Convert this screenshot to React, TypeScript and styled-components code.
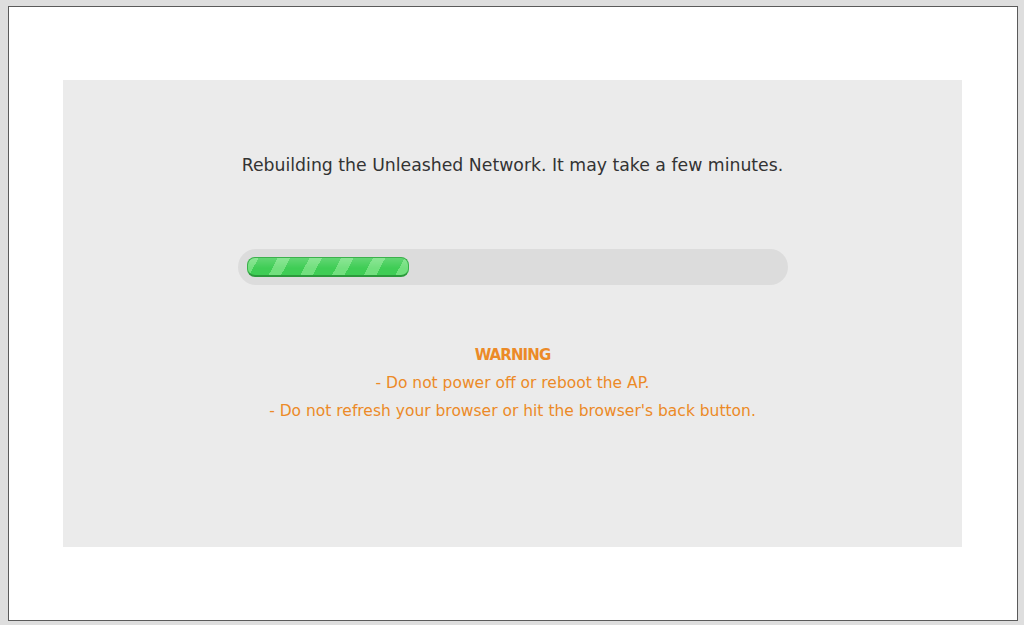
import React from 'react';
import styled, { createGlobalStyle } from 'styled-components';

const GlobalStyle = createGlobalStyle`
    html, body {
        margin: 0;
        padding: 0;
        background: #dedede;
    }
    body {
        padding: 6px 6px 4px 8px;
        font-family: 'DejaVu Sans', Verdana, sans-serif;
    }
`;

const Frame = styled.div`
    box-sizing: border-box;
    height: 615px;
    background: #fff;
    border: 1px solid #5a5a5a;
    padding: 73px 55px 73px 54px;
`;

const Panel = styled.div`
    height: 100%;
    background: #ebebeb;
    display: flex;
    flex-direction: column;
    align-items: center;
`;

const Message = styled.div`
    margin-top: 73px;
    font-size: 17.3px;
    color: #333;
    line-height: 24px;
`;

const Track = styled.div`
    margin-top: 72px;
    width: 550px;
    height: 36px;
    border-radius: 18px;
    background: #dcdcdc;
    box-sizing: border-box;
    padding: 8px 9px;
`;

const Fill = styled.div`
    height: 20px;
    border-radius: 8px;
    box-sizing: border-box;
    border: 1px solid #3cb14c;
    border-bottom: 2px solid #2b9a3b;
    background-color: #45d15a;
    background-image: linear-gradient(rgba(255, 255, 255, 0.18), rgba(255, 255, 255, 0) 60%),
        repeating-linear-gradient(
            -62deg,
            #72e07e 0px,
            #72e07e 11px,
            #3fcd55 11px,
            #3fcd55 28px
        );
`;

const Warning = styled.div`
    margin-top: 56px;
    color: #ec8a27;
    font-size: 15.5px;
    line-height: 28px;
    text-align: center;
`;

const WarningTitle = styled.div`
    font-weight: bold;
    font-size: 15px;
    letter-spacing: -0.9px;
`;

const progress = 162;

export default function App() {
    return (
        <>
            <GlobalStyle />
            <Frame>
                <Panel>
                    <Message>Rebuilding the Unleashed Network. It may take a few minutes.</Message>
                    <Track>
                        <Fill style={{ width: progress }} />
                    </Track>
                    <Warning>
                        <WarningTitle>WARNING</WarningTitle>
                        <div>- Do not power off or reboot the AP.</div>
                        <div>- Do not refresh your browser or hit the browser's back button.</div>
                    </Warning>
                </Panel>
            </Frame>
        </>
    );
}
